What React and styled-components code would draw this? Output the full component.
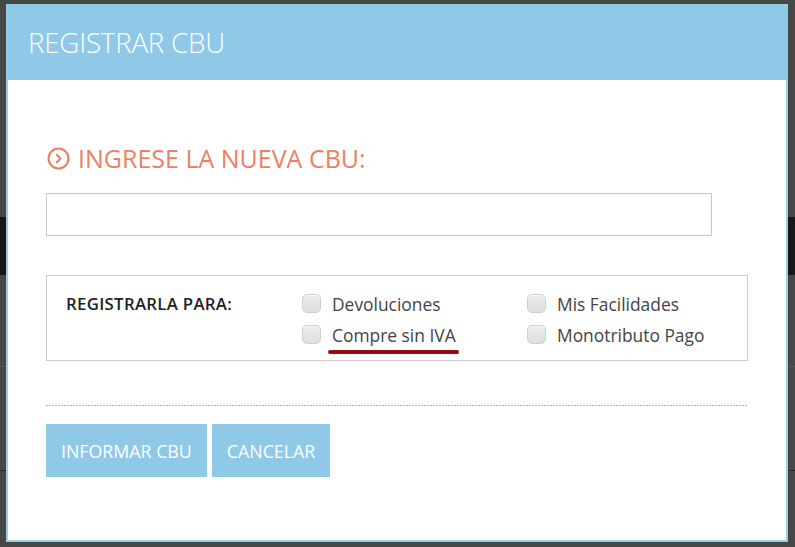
import React from "react";
import styled, { createGlobalStyle } from "styled-components";

const Global = createGlobalStyle`
  html, body { margin: 0; padding: 0; }
  body {
    background: #474747;
    font-family: "Open Sans", "Liberation Sans", sans-serif;
  }
  * { box-sizing: border-box; }
`;

const Page = styled.div`
  width: 795px;
  height: 547px;
  overflow: hidden;
  padding: 4px 0 0 6px;
  background:
    linear-gradient(to bottom, transparent 217px, #181818 217px, #181818 275px, transparent 275px),
    linear-gradient(to bottom, transparent 366px, #5a5a5a 366px, #5a5a5a 367px, transparent 367px),
    linear-gradient(to bottom, transparent 470px, #262626 470px, #262626 471px, transparent 471px),
    #474747;
`;

const Modal = styled.div`
  width: 782px;
  background: #fff;
`;

const Header = styled.div`
  height: 76px;
  background: #90c8e8;
  display: flex;
  align-items: center;
  padding: 0 0 0 22px;
`;

const Title = styled.h1`
  margin: 0;
  color: #fff;
  font-size: 27.7px;
  font-weight: 300;
  letter-spacing: -0.2px;
`;

const Body = styled.div`
  border: 2px solid #9ccde8;
  border-top: none;
  padding: 63px 38px 63px 38px;
  display: flex;
  flex-direction: column;
`;

const Heading = styled.h2`
  margin: 0;
  display: flex;
  align-items: center;
  gap: 8px;
  height: 30px;
  color: #f07f62;
  font-size: 25px;
  font-weight: 400;
  padding-left: 1px;
`;

const TextInput = styled.input`
  margin-top: 20px;
  width: 666px;
  height: 43px;
  border: 1px solid #c8c8c8;
  background: #fff;
  outline: none;
`;

const Options = styled.div`
  margin-top: 39px;
  border: 1px solid #cdcdcd;
  height: 86px;
  padding: 12px 0 0 19px;
  display: flex;
`;

const OptionsLabel = styled.div`
  flex: none;
  width: 236px;
  line-height: 31px;
  font-size: 16.8px;
  letter-spacing: 0.3px;
  font-weight: 600;
  color: #222;
`;

const CheckGrid = styled.div`
  flex: 1;
  display: grid;
  grid-template-columns: 225px 1fr;
  grid-auto-rows: 31px;
`;

const CheckItem = styled.label`
  display: flex;
  align-items: center;
  gap: 11px;
  font-size: 17.4px;
  color: #444;
`;

const Box = styled.span`
  width: 19px;
  height: 19px;
  border-radius: 5px;
  border: 1px solid #cfcfcf;
  background: linear-gradient(to bottom, #ececec, #dedede);
  box-shadow: inset 0 1px 1px rgba(255, 255, 255, 0.6);
  flex: none;
`;

const LabelText = styled.span`
  position: relative;
`;

const Underline = styled.span`
  position: absolute;
  left: -4px;
  right: -3px;
  bottom: -7px;
  height: 4px;
  border-radius: 2px;
  background: #960b0b;
`;

const Divider = styled.div`
  margin-top: 44px;
  height: 1px;
  background-image: repeating-linear-gradient(to right, #b5b5b5 0 2px, transparent 2px 3px);
`;

const Actions = styled.div`
  margin-top: 18px;
  display: flex;
  gap: 5px;
`;

const Button = styled.button`
  height: 53px;
  padding: 0 15px;
  border: none;
  background: #90c8e8;
  color: #fff;
  font-family: "Open Sans", "Liberation Sans", sans-serif;
  font-size: 17.8px;
  font-weight: 400;
  cursor: pointer;
`;

const CircleChevron = () => (
  <svg width="23" height="23" viewBox="0 0 24 24" fill="none" stroke="#ef7c5f" strokeWidth="2.2" strokeLinecap="round" strokeLinejoin="round">
    <circle cx="12" cy="12" r="10.4" />
    <path d="M10.3 8.2 L14 12 L10.3 15.8" />
  </svg>
);

const Check = ({ children, mark }) => (
  <CheckItem>
    <Box />
    <LabelText>
      {children}
      {mark && <Underline />}
    </LabelText>
  </CheckItem>
);

export default function App() {
  return (
    <>
      <Global />
      <Page>
        <Modal>
          <Header>
            <Title>REGISTRAR CBU</Title>
          </Header>
          <Body>
            <Heading>
              <CircleChevron />
              INGRESE LA NUEVA CBU:
            </Heading>
            <TextInput type="text" />
            <Options>
              <OptionsLabel>REGISTRARLA PARA:</OptionsLabel>
              <CheckGrid>
                <Check>Devoluciones</Check>
                <Check>Mis Facilidades</Check>
                <Check mark>Compre sin IVA</Check>
                <Check>Monotributo Pago</Check>
              </CheckGrid>
            </Options>
            <Divider />
            <Actions>
              <Button>INFORMAR CBU</Button>
              <Button>CANCELAR</Button>
            </Actions>
          </Body>
        </Modal>
      </Page>
    </>
  );
}
